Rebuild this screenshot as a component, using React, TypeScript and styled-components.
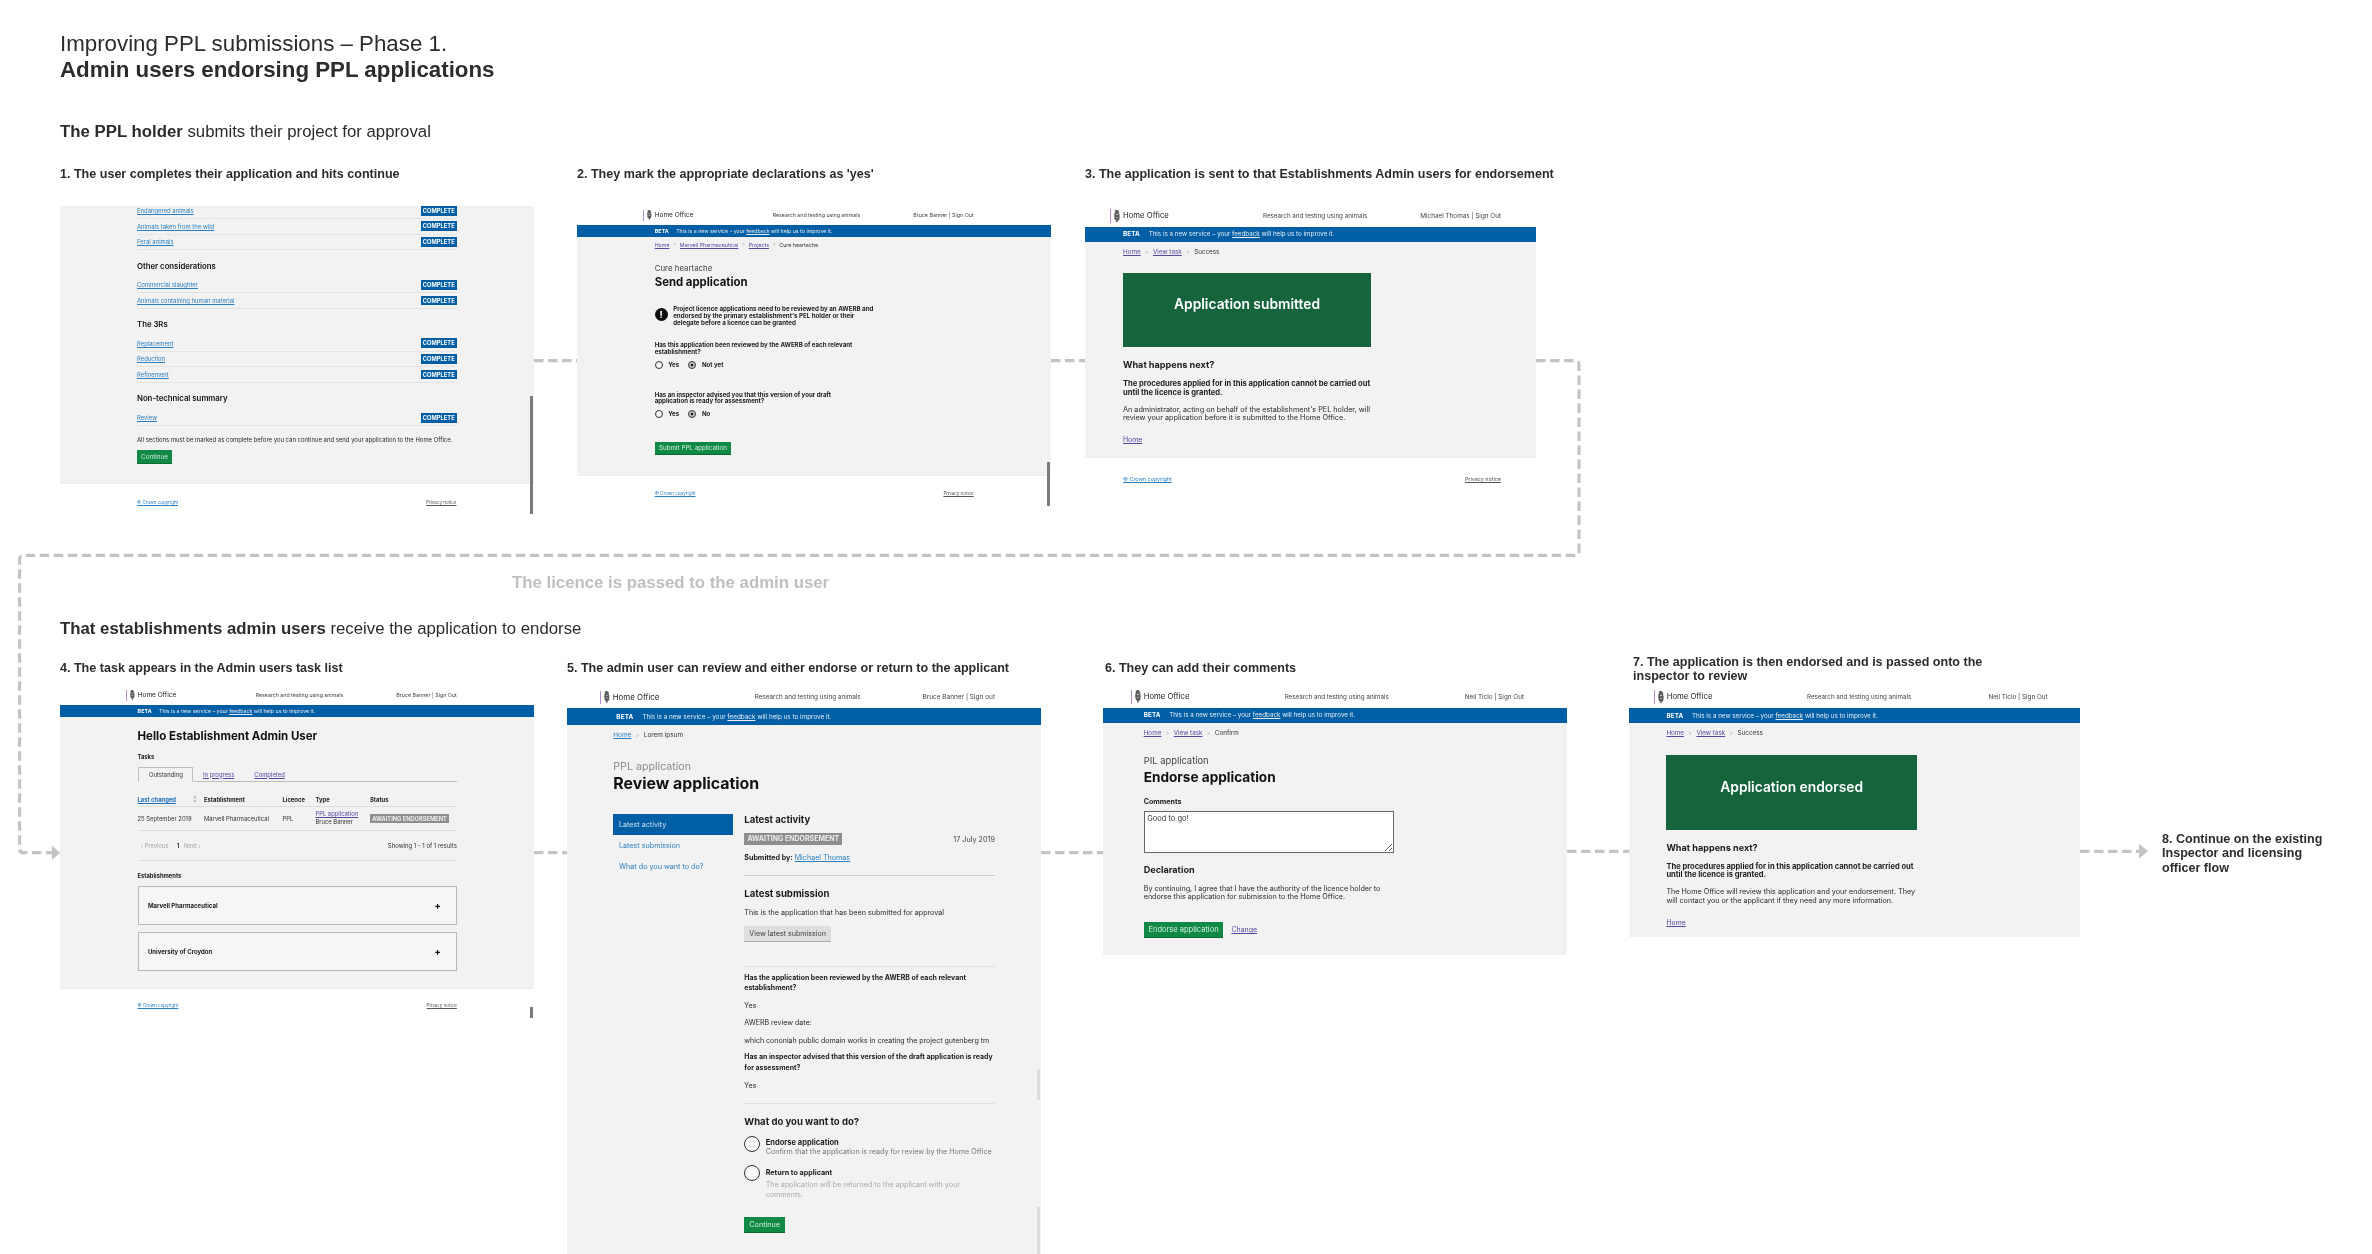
import React from 'react';
import styled, { createGlobalStyle } from 'styled-components';

const GlobalStyle = createGlobalStyle`
  html, body { margin: 0; padding: 0; background: #fff; }
  * { box-sizing: border-box; }
`;

const UI = `Inter, "Liberation Sans", sans-serif`;
const SOFT = 0.5;
const SOFT_LABEL = 0.3;

/* ---------- board ---------- */
const Board = styled.main`
  position: relative;
  width: 2372px;
  height: 1254px;
  overflow: hidden;
  padding: 31px 0 0 60px;
  background: #fff;
  color: #2c2c2c;
  font-family: "Liberation Sans", Arial, sans-serif;
`;
const Title = styled.h1`
  margin: 0;
  font-size: 22.3px;
  line-height: 26px;
  font-weight: 400;
  white-space: nowrap;
  filter: blur(${SOFT_LABEL}px);
  strong { font-weight: 700; }
`;
const Lede = styled.h2<{ $mt: number }>`
  margin: ${p => p.$mt}px 0 0;
  font-size: 16.8px;
  line-height: 20px;
  font-weight: 400;
  white-space: nowrap;
  filter: blur(${SOFT_LABEL}px);
  strong { font-weight: 700; }
`;
const Lane = styled.div<{ $mt: number; $h: number }>`
  display: flex;
  align-items: flex-start;
  margin-top: ${p => p.$mt}px;
  height: ${p => p.$h}px;
`;
const Step = styled.section<{ $ml?: number; $w: number; $mt?: number }>`
  flex: none;
  width: ${p => p.$w}px;
  margin-left: ${p => p.$ml ?? 0}px;
  margin-top: ${p => p.$mt ?? 0}px;
`;
const StepLabel = styled.h3<{ $lh?: number; $mt?: number; $ml?: number }>`
  margin: ${p => p.$mt ?? 0}px 0 0 ${p => p.$ml ?? 0}px;
  font-size: 12.55px;
  line-height: ${p => p.$lh ?? 20}px;
  font-weight: 700;
  white-space: nowrap;
  filter: blur(${SOFT_LABEL}px);
`;
const PassedNote = styled.p`
  margin: 0 0 0 452px;
  font-size: 16.8px;
  line-height: 20px;
  font-weight: 700;
  color: #bfbfbf;
  white-space: nowrap;
  filter: blur(${SOFT_LABEL}px);
`;
const Connectors = styled.svg`
  position: absolute;
  inset: 0;
  pointer-events: none;
`;

/* ---------- mock screens ---------- */
const Screen = styled.div<{ $mt: number; $k?: number; $h: number }>`
  position: relative;
  margin-top: ${p => p.$mt}px;
  height: ${p => p.$h}px;
  overflow: hidden;
  font-family: ${UI};
  font-size: ${p => (p.$k ?? 1) * 10}px;
  color: #111;
  background: #fff;
  filter: blur(${SOFT}px);
`;
const Scrollbar = styled.i<{ $top: number; $h: number; $light?: boolean }>`
  position: absolute;
  right: 1.5px;
  top: ${p => p.$top}px;
  height: ${p => p.$h}px;
  width: 2.2px;
  background: ${p => (p.$light ? '#dcdcdc' : '#7b7b7b')};
`;
const Header = styled.header<{ $h: number; $pb: number; $left: number; $right: number; $col: number }>`
  display: grid;
  grid-template-columns: ${p => p.$col}px 1fr auto;
  align-items: center;
  height: ${p => p.$h}px;
  padding: 0 ${p => p.$right}px ${p => p.$pb}px ${p => p.$left}px;
`;
const Brand = styled.div`
  display: flex;
  align-items: center;
  gap: 2.9px;
`;
const BrandBar = styled.i<{ $h: number }>`
  width: 1.4px;
  height: ${p => p.$h}px;
  background: #b48fd6;
`;
const BrandName = styled.span`
  font-size: 0.77em;
  color: #222;
  white-space: nowrap;
`;
const Service = styled.span`
  font-size: 0.625em;
  color: #444;
  white-space: nowrap;
`;
const UserNav = styled.span`
  font-size: 0.635em;
  color: #444;
  white-space: nowrap;
`;
const BetaBar = styled.div<{ $h: number; $left: number }>`
  display: flex;
  align-items: center;
  height: ${p => p.$h}px;
  padding-left: ${p => p.$left}px;
  background: #005ea5;
  color: #e3edf5;
  font-size: 0.625em;
  white-space: nowrap;
  a { color: inherit; text-decoration: underline; }
`;
const BetaTag = styled.b`
  flex: none;
  width: 4.1em;
  font-weight: 700;
  letter-spacing: 0.03em;
  color: #fff;
`;
const Body = styled.div<{ $h: number; $pl: number; $pr: number; $pt?: number }>`
  height: ${p => p.$h}px;
  padding: ${p => p.$pt ?? 0}px ${p => p.$pr}px 0 ${p => p.$pl}px;
  background: #f2f2f2;
  overflow: hidden;
`;
const Footer = styled.footer<{ $h: number; $pl: number; $pr: number; $fs?: number }>`
  display: flex;
  justify-content: space-between;
  align-items: center;
  height: ${p => p.$h}px;
  padding: 0 ${p => p.$pr}px 0 ${p => p.$pl}px;
  border-top: 1px solid #ececec;
  font-size: ${p => p.$fs ?? 0.54}em;
  white-space: nowrap;
`;
const FooterLink = styled.a<{ $muted?: boolean }>`
  color: ${p => (p.$muted ? '#555' : '#2b7fc0')};
  text-decoration: underline;
`;
const Crumbs = styled.nav`
  display: flex;
  align-items: center;
  gap: 0.7em;
  height: 8px;
  font-size: 0.63em;
  color: #333;
  white-space: nowrap;
  span { color: #aaa; font-size: 0.85em; }
`;
const TextLink = styled.a<{ $blue?: boolean }>`
  color: ${p => (p.$blue ? '#2b7fc0' : '#5a45a0')};
  text-decoration: underline;
`;
type Flow = { $mt?: number; $lh?: number; $fs?: number };
const Caption = styled.p<Flow & { $pale?: boolean }>`
  margin: ${p => p.$mt ?? 0}px 0 0;
  font-size: ${p => p.$fs ?? 0.94}em;
  line-height: ${p => p.$lh ?? 10}px;
  color: ${p => (p.$pale ? '#8a8a8a' : '#444')};
  white-space: nowrap;
`;
const PageTitle = styled.h4<Flow>`
  margin: ${p => p.$mt ?? 0}px 0 0;
  font-size: ${p => p.$fs ?? 1.36}em;
  line-height: ${p => p.$lh ?? 14}px;
  font-weight: 700;
  color: #111;
  white-space: nowrap;
`;
const Heading = styled.h5<Flow>`
  margin: ${p => p.$mt ?? 0}px 0 0;
  font-size: ${p => p.$fs ?? 0.91}em;
  line-height: ${p => p.$lh ?? 12}px;
  font-weight: 700;
  color: #1c1c1c;
  white-space: nowrap;
`;
const Strong = styled.p<Flow>`
  margin: ${p => p.$mt ?? 0}px 0 0;
  font-size: ${p => p.$fs ?? 0.755}em;
  line-height: ${p => p.$lh ?? 8.6}px;
  font-weight: 700;
  color: #1c1c1c;
  white-space: nowrap;
`;
const Copy = styled.p<Flow>`
  margin: ${p => p.$mt ?? 0}px 0 0;
  font-size: ${p => p.$fs ?? 0.725}em;
  line-height: ${p => p.$lh ?? 8.5}px;
  color: #2a2a2a;
  white-space: nowrap;
  b { font-weight: 700; color: #1c1c1c; }
`;
const Banner = styled.div<{ $w: number; $h: number; $mt: number }>`
  width: ${p => p.$w}px;
  height: ${p => p.$h}px;
  margin-top: ${p => p.$mt}px;
  padding-top: 21.5px;
  background: #15643b;
  color: #fff;
  font-size: 1.38em;
  line-height: 20px;
  font-weight: 600;
  text-align: center;
  white-space: nowrap;
`;
const GreenButton = styled.button<{ $w: number; $h: number; $mt?: number; $fs?: number }>`
  display: block;
  width: ${p => p.$w}px;
  height: ${p => p.$h}px;
  margin: ${p => p.$mt ?? 0}px 0 0;
  padding: 0;
  border: 0;
  border-bottom: 1px solid #0a6a32;
  background: #0f8944;
  color: #d7efe0;
  font-family: ${UI};
  font-size: ${p => p.$fs ?? 0.75}em;
  white-space: nowrap;
`;
const GreyButton = styled.button<{ $w: number; $h: number; $mt: number }>`
  display: block;
  width: ${p => p.$w}px;
  height: ${p => p.$h}px;
  margin: ${p => p.$mt}px 0 0;
  padding: 0;
  border: 0;
  border-bottom: 1px solid #aaa;
  background: #dedede;
  color: #444;
  font-family: ${UI};
  font-size: 0.7em;
  white-space: nowrap;
`;

/* step 1 */
const TaskList = styled.div<{ $mt: number }>`
  margin-top: ${p => p.$mt}px;
`;
const TaskRow = styled.div`
  display: flex;
  justify-content: space-between;
  align-items: center;
  height: 15.55px;
  border-bottom: 1px solid #e4e4e4;
  font-size: 0.592em;
  white-space: nowrap;
`;
const CompleteTag = styled.b`
  display: block;
  width: 35.5px;
  height: 9.8px;
  background: #005ea5;
  color: #fff;
  font-size: 0.97em;
  line-height: 9.8px;
  font-weight: 700;
  text-align: center;
`;
const SectionName = styled.h5<{ $mt: number }>`
  margin: ${p => p.$mt}px 0 0;
  font-size: 0.778em;
  line-height: 14px;
  font-weight: 600;
  color: #111;
  white-space: nowrap;
`;

/* step 2 */
const Warning = styled.div<{ $mt: number }>`
  display: flex;
  align-items: center;
  gap: 5.5px;
  height: 21px;
  margin-top: ${p => p.$mt}px;
`;
const WarningIcon = styled.span`
  flex: none;
  display: flex;
  align-items: center;
  justify-content: center;
  width: 13px;
  height: 13px;
  margin-top: -3px;
  border-radius: 50%;
  background: #0b0c0c;
  color: #fff;
  font-size: 9px;
  line-height: 1;
  font-weight: 800;
`;
const RadioRow = styled.div<{ $mt: number }>`
  display: flex;
  align-items: center;
  height: 9px;
  margin-top: ${p => p.$mt}px;
`;
const Radio = styled.i<{ $d: number; $on?: boolean }>`
  flex: none;
  display: block;
  width: ${p => p.$d}px;
  height: ${p => p.$d}px;
  border: 1px solid #333;
  border-radius: 50%;
  background: ${p => (p.$on ? 'radial-gradient(circle, #111 0 34%, #ccc 38% 100%)' : '#f8f8f8')};
`;
const RadioText = styled.span<{ $gap: number; $w?: number }>`
  margin-left: ${p => p.$gap}px;
  width: ${p => (p.$w ? `${p.$w}px` : 'auto')};
  font-size: 0.73em;
  font-weight: 700;
  color: #222;
  white-space: nowrap;
`;

/* step 4 */
const Tabs = styled.div<{ $mt: number }>`
  display: flex;
  align-items: center;
  height: 14.7px;
  margin-top: ${p => p.$mt}px;
  border-bottom: 1px solid #bdbdbd;
  font-size: 0.705em;
  white-space: nowrap;
`;
const ActiveTab = styled.span`
  align-self: stretch;
  display: flex;
  align-items: center;
  width: 55.4px;
  padding-left: 10.4px;
  margin-bottom: -1px;
  border: 1px solid #bdbdbd;
  border-bottom-color: #f2f2f2;
  background: #f2f2f2;
  color: #333;
`;
const TabLink = styled.a<{ $ml: number }>`
  margin-left: ${p => p.$ml}px;
  color: #5a45a0;
  text-decoration: underline;
`;
const TableRow = styled.div<{ $mt?: number; $h: number }>`
  display: grid;
  grid-template-columns: 66.5px 78.5px 32.9px 54.6px 1fr;
  align-items: center;
  height: ${p => p.$h}px;
  margin-top: ${p => p.$mt ?? 0}px;
  border-bottom: 1px solid #dcdcdc;
  font-size: 0.7em;
  color: #333;
  white-space: nowrap;
`;
const TableHead = styled.b`
  font-weight: 700;
  color: #222;
`;
const SortCell = styled.span`
  display: flex;
  align-items: center;
  justify-content: space-between;
  padding-right: 7px;
`;
const SortLink = styled.a`
  color: #1d70b8;
  font-weight: 700;
  text-decoration: underline;
`;
const TypeCell = styled.div`
  line-height: 8.3px;
`;
const StatusTag = styled.b<{ $w: number; $h: number; $fs: number }>`
  display: block;
  flex: none;
  width: ${p => p.$w}px;
  height: ${p => p.$h}px;
  background: #8e8e8e;
  color: #ececec;
  font-size: ${p => p.$fs}em;
  line-height: ${p => p.$h}px;
  font-weight: 700;
  text-align: center;
  white-space: nowrap;
`;
const Pager = styled.div`
  display: flex;
  align-items: center;
  height: 30.6px;
  padding-left: 3.2px;
  border-bottom: 1px solid #dcdcdc;
  font-size: 0.7em;
  color: #a5a5a5;
  white-space: nowrap;
`;
const PagerCurrent = styled.b`
  margin: 0 4.6px 0 8.3px;
  font-weight: 700;
  color: #333;
`;
const PagerCount = styled.span`
  margin-left: auto;
  font-size: 1.015em;
  color: #333;
`;
const Accordion = styled.div<{ $mt: number }>`
  display: flex;
  justify-content: space-between;
  align-items: center;
  height: 39px;
  margin-top: ${p => p.$mt}px;
  padding: 0 15px 0 9.4px;
  border: 1px solid #b8b8b8;
  background: #f6f6f6;
  font-size: 0.72em;
  font-weight: 700;
  color: #222;
  white-space: nowrap;
`;
const Plus = styled.span`
  font-size: 1.5em;
  line-height: 1;
  font-weight: 800;
  color: #111;
`;

/* step 5 */
const Columns = styled.div<{ $mt: number }>`
  display: flex;
  gap: 11.6px;
  margin-top: ${p => p.$mt}px;
`;
const SideNav = styled.nav`
  flex: none;
  width: 119.4px;
`;
const SideItem = styled.a<{ $active?: boolean }>`
  display: flex;
  align-items: center;
  height: 21px;
  padding-left: 5.7px;
  background: ${p => (p.$active ? '#005ea5' : 'transparent')};
  color: ${p => (p.$active ? '#cfe0ee' : '#2b7fc0')};
  font-size: 0.706em;
  white-space: nowrap;
`;
const MainCol = styled.div`
  flex: none;
  width: 250.7px;
`;
const SpreadRow = styled.div<{ $mt: number; $h: number }>`
  display: flex;
  justify-content: space-between;
  align-items: center;
  height: ${p => p.$h}px;
  margin-top: ${p => p.$mt}px;
`;
const Rule = styled.hr<{ $mt: number; $dark?: boolean }>`
  height: ${p => (p.$dark ? 1.5 : 1)}px;
  margin: ${p => p.$mt}px 0 0;
  border: 0;
  background: ${p => (p.$dark ? '#cccccc' : '#e0e0e0')};
`;
const DateText = styled.span`
  font-size: 0.708em;
  color: #444;
`;
const ChoiceRow = styled.div<{ $mt: number; $h: number }>`
  display: flex;
  gap: 5.4px;
  height: ${p => p.$h}px;
  margin-top: ${p => p.$mt}px;
`;
const ChoiceText = styled.div`
  padding-top: 3.5px;
`;
const Hint = styled.p<Flow & { $pale?: boolean }>`
  margin: ${p => p.$mt ?? 0}px 0 0;
  font-size: 0.702em;
  line-height: ${p => p.$lh ?? 8.7}px;
  color: ${p => (p.$pale ? '#aaaaaa' : '#777777')};
  white-space: nowrap;
`;

/* step 6 */
const CommentBox = styled.textarea`
  display: block;
  width: 250px;
  height: 42px;
  margin: 4.5px 0 0;
  padding: 2.5px 2.5px;
  border: 1.4px solid #666;
  border-radius: 0;
  outline: 0;
  background: #fff;
  color: #333;
  font-family: ${UI};
  font-size: 0.75em;
  line-height: 9px;
`;
const ActionRow = styled.div<{ $mt: number }>`
  display: flex;
  align-items: center;
  gap: 8px;
  margin-top: ${p => p.$mt}px;
`;
const ActionLink = styled.a`
  font-size: 0.7em;
  color: #5a45a0;
  text-decoration: underline;
`;

/* ---------- shared pieces ---------- */
const Crest = ({ h }: { h: number }) => (
  <svg width={h * 0.42} height={h * 0.92} viewBox="0 0 10 22" aria-hidden="true">
    <path
      fill="#5d5d5d"
      d="M3.5 0h3l.4 2 1.6-.8.3 2.2-1.2 1 1.6 1.2-.6 1.6 1.4 1.8-.8 1.4.8 1.4-1 1.6.8 1.8-1.6 1.4.4 1.6L6.2 18l.3 2.4L5 22l-1.5-1.6.3-2.4-2.4-1.1.4-1.6L.2 13.9 1 12.1 0 10.5l.8-1.4L0 7.7l1.4-1.8L.8 4.3 2.4 3.1l-1.2-1L1.5 0l1.6 1z"
    />
    <path fill="#f0f0f0" d="M3.3 7h3.4v1H3.3zM3.3 12h3.4v1H3.3z" />
  </svg>
);

const Sorter = () => (
  <svg width="4" height="8" viewBox="0 0 4 8" aria-hidden="true">
    <path fill="#c4c4c4" d="M2 0 4 3.2H0zM2 8 0 4.8h4z" />
  </svg>
);

type ChromeProps = {
  h: number; pb: number; left: number; right: number; col: number;
  barH: number; user: string; betaH: number; betaLeft: number;
};
const Chrome = ({ h, pb, left, right, col, barH, user, betaH, betaLeft }: ChromeProps) => (
  <>
    <Header $h={h} $pb={pb} $left={left} $right={right} $col={col}>
      <Brand>
        <BrandBar $h={barH} />
        <Crest h={barH} />
        <BrandName>Home Office</BrandName>
      </Brand>
      <Service>Research and testing using animals</Service>
      <UserNav>{user}</UserNav>
    </Header>
    <BetaBar $h={betaH} $left={betaLeft}>
      <BetaTag>BETA</BetaTag>
      <span>This is a new service – your <a>feedback</a> will help us to improve it.</span>
    </BetaBar>
  </>
);

const PageFoot = ({ h, pl, pr, fs }: { h: number; pl: number; pr: number; fs?: number }) => (
  <Footer $h={h} $pl={pl} $pr={pr} $fs={fs}>
    <FooterLink>© Crown copyright</FooterLink>
    <FooterLink $muted>Privacy notice</FooterLink>
  </Footer>
);

const Task = ({ name }: { name: string }) => (
  <TaskRow>
    <TextLink $blue>{name}</TextLink>
    <CompleteTag>COMPLETE</CompleteTag>
  </TaskRow>
);

export default function App() {
  return (
    <Board>
      <GlobalStyle />
      <Title>
        Improving PPL submissions – Phase 1.<br />
        <strong>Admin users endorsing PPL applications</strong>
      </Title>
      <Lede $mt={39}><strong>The PPL holder</strong> submits their project for approval</Lede>

      <Lane $mt={21.8} $h={409.2}>
        <Step $w={474}>
          <StepLabel>1. The user completes their application and hits continue</StepLabel>
          <Screen $mt={22.1} $h={308}>
            <Body $h={277.5} $pl={77} $pr={77.5}>
              <TaskList $mt={-2.4}>
                <Task name="Endangered animals" />
                <Task name="Animals taken from the wild" />
                <Task name="Feral animals" />
              </TaskList>
              <SectionName $mt={8.4}>Other considerations</SectionName>
              <TaskList $mt={5.1}>
                <Task name="Commercial slaughter" />
                <Task name="Animals containing human material" />
              </TaskList>
              <SectionName $mt={8.3}>The 3Rs</SectionName>
              <TaskList $mt={5.1}>
                <Task name="Replacement" />
                <Task name="Reduction" />
                <Task name="Refinement" />
              </TaskList>
              <SectionName $mt={8.25}>Non-technical summary</SectionName>
              <TaskList $mt={5.5}>
                <Task name="Review" />
              </TaskList>
              <Copy $mt={10.25} $lh={8} $fs={0.594}>All sections must be marked as complete before you can continue and send your application to the Home Office.</Copy>
              <GreenButton $w={35} $h={13.5} $mt={6.1} $fs={0.63}>Continue</GreenButton>
            </Body>
            <PageFoot h={36.6} pl={77} pr={77.5} fs={0.455} />
            <Scrollbar $top={190} $h={118} />
          </Screen>
        </Step>

        <Step $ml={43} $w={474}>
          <StepLabel>2. They mark the appropriate declarations as 'yes'</StepLabel>
          <Screen $mt={24.2} $k={0.84} $h={303}>
            <Chrome h={16.7} pb={1.7} left={66} right={77.3} col={129.7} barH={11} user="Bruce Banner | Sign Out" betaH={12.3} betaLeft={77.7} />
            <Body $h={238} $pl={77.7} $pr={77} $pt={4}>
              <Crumbs>
                <TextLink>Home</TextLink><span>&gt;</span>
                <TextLink>Marvell Pharmaceutical</TextLink><span>&gt;</span>
                <TextLink>Projects</TextLink><span>&gt;</span>
                Cure heartache
              </Crumbs>
              <Caption $mt={14} $lh={10}>Cure heartache</Caption>
              <PageTitle $mt={2} $fs={1.354} $lh={14}>Send application</PageTitle>
              <Warning $mt={16.2}>
                <WarningIcon>!</WarningIcon>
                <Strong $lh={7} $fs={0.739}>
                  Project licence applications need to be reviewed by an AWERB and<br />
                  endorsed by the primary establishment's PEL holder or their<br />
                  delegate before a licence can be granted
                </Strong>
              </Warning>
              <Strong $mt={16.1} $lh={6.8} $fs={0.73}>
                Has this application been reviewed by the AWERB of each relevant<br />establishment?
              </Strong>
              <RadioRow $mt={4.3}>
                <Radio $d={8} /><RadioText $gap={5.6} $w={20}>Yes</RadioText>
                <Radio $d={8} $on /><RadioText $gap={5.6}>Not yet</RadioText>
              </RadioRow>
              <Strong $mt={22.4} $lh={6.8} $fs={0.73}>
                Has an inspector advised you that this version of your draft<br />application is ready for assessment?
              </Strong>
              <RadioRow $mt={4.3}>
                <Radio $d={8} /><RadioText $gap={5.6} $w={20}>Yes</RadioText>
                <Radio $d={8} $on /><RadioText $gap={5.6}>No</RadioText>
              </RadioRow>
              <GreenButton $w={76.7} $h={13.3} $mt={23.2} $fs={0.745}>Submit PPL application</GreenButton>
            </Body>
            <PageFoot h={36} pl={77.7} pr={77.3} />
            <Scrollbar $top={254} $h={43.7} />
          </Screen>
        </Step>

        <Step $ml={34} $w={451}>
          <StepLabel>3. The application is sent to that Establishments Admin users for endorsement</StepLabel>
          <Screen $mt={23.2} $h={296}>
            <Chrome h={20} pb={2} left={25} right={35} col={153} barH={14} user="Michael Thomas | Sign Out" betaH={15} betaLeft={38} />
            <Body $h={215} $pl={38} $pr={35} $pt={5.7}>
              <Crumbs>
                <TextLink>Home</TextLink><span>&gt;</span>
                <TextLink>View task</TextLink><span>&gt;</span>
                Success
              </Crumbs>
              <Banner $w={248} $h={74.6} $mt={17}>Application submitted</Banner>
              <Heading $mt={11.4}>What happens next?</Heading>
              <Strong $mt={9.7}>
                The procedures applied for in this application cannot be carried out<br />until the licence is granted.
              </Strong>
              <Copy $mt={8.15}>
                An administrator, acting on behalf of the establishment's PEL holder, will<br />
                review your application before it is submitted to the Home Office.
              </Copy>
              <Copy $mt={12.45} $lh={9} $fs={0.69}><TextLink>Home</TextLink></Copy>
            </Body>
            <PageFoot h={42.6} pl={38} pr={35} />
          </Screen>
        </Step>
      </Lane>

      <PassedNote>The licence is passed to the admin user</PassedNote>
      <Lede $mt={26.3}><strong>That establishments admin users</strong> receive the application to endorse</Lede>

      <Lane $mt={18.4} $h={600}>
        <Step $w={474}>
          <StepLabel>4. The task appears in the Admin users task list</StepLabel>
          <Screen $mt={10.3} $k={0.84} $h={332}>
            <Chrome h={17} pb={2} left={66} right={77.2} col={129.7} barH={11} user="Bruce Banner | Sign Out" betaH={12.3} betaLeft={77.5} />
            <Body $h={270.4} $pl={77.5} $pr={77.2} $pt={12}>
              <PageTitle $fs={1.37} $lh={14}>Hello Establishment Admin User</PageTitle>
              <Strong $mt={9.4} $lh={8} $fs={0.694}>Tasks</Strong>
              <Tabs $mt={6.6}>
                <ActiveTab>Outstanding</ActiveTab>
                <TabLink $ml={10}>In progress</TabLink>
                <TabLink $ml={20}>Completed</TabLink>
              </Tabs>
              <TableRow $mt={10.7} $h={14.6}>
                <SortCell><SortLink>Last changed</SortLink><Sorter /></SortCell>
                <TableHead>Establishment</TableHead>
                <TableHead>Licence</TableHead>
                <TableHead>Type</TableHead>
                <TableHead>Status</TableHead>
              </TableRow>
              <TableRow $h={23.4}>
                <span>25 September 2019</span>
                <span>Marvell Pharmaceutical</span>
                <span>PPL</span>
                <TypeCell><TextLink>PPL application</TextLink><br />Bruce Banner</TypeCell>
                <StatusTag $w={79} $h={9.3} $fs={0.97}>AWAITING ENDORSEMENT</StatusTag>
              </TableRow>
              <Pager>
                <span>‹ Previous</span>
                <PagerCurrent>1</PagerCurrent>
                <span>Next ›</span>
                <PagerCount>Showing 1 - 1 of 1 results</PagerCount>
              </Pager>
              <Strong $mt={10.4} $lh={8} $fs={0.694}>Establishments</Strong>
              <Accordion $mt={6.6}>Marvell Pharmaceutical<Plus>+</Plus></Accordion>
              <Accordion $mt={6.4}>University of Croydon<Plus>+</Plus></Accordion>
            </Body>
            <PageFoot h={35.2} pl={77.5} pr={77.2} />
            <Scrollbar $top={318.7} $h={11.3} />
          </Screen>
        </Step>

        <Step $ml={33} $w={474}>
          <StepLabel>5. The admin user can review and either endorse or return to the applicant</StepLabel>
          <Screen $mt={10.3} $k={1.02} $h={570}>
            <Chrome h={20.3} pb={1.7} left={33} right={46} col={154.7} barH={13.3} user="Bruce Banner | Sign out" betaH={16.7} betaLeft={49.3} />
            <Body $h={540} $pl={46.3} $pr={46} $pt={6}>
              <Crumbs>
                <TextLink $blue>Home</TextLink><span>&gt;</span>
                Lorem ipsum
              </Crumbs>
              <Caption $mt={20.8} $fs={1.047} $lh={13} $pale>PPL application</Caption>
              <PageTitle $mt={2.2} $fs={1.556} $lh={18}>Review application</PageTitle>
              <Columns $mt={21}>
                <SideNav>
                  <SideItem $active>Latest activity</SideItem>
                  <SideItem>Latest submission</SideItem>
                  <SideItem>What do you want to do?</SideItem>
                </SideNav>
                <MainCol>
                  <Heading $mt={0.3} $fs={0.934}>Latest activity</Heading>
                  <SpreadRow $mt={7} $h={11.7}>
                    <StatusTag $w={98} $h={11.7} $fs={0.687}>AWAITING ENDORSEMENT</StatusTag>
                    <DateText>17 July 2019</DateText>
                  </SpreadRow>
                  <Copy $mt={7.8} $lh={9} $fs={0.7}><b>Submitted by:</b> <TextLink $blue>Michael Thomas</TextLink></Copy>
                  <Rule $mt={13.2} $dark />
                  <Heading $mt={11.2} $fs={0.94}>Latest submission</Heading>
                  <Copy $mt={8.5} $lh={9} $fs={0.703}>This is the application that has been submitted for approval</Copy>
                  <GreyButton $w={86.7} $h={16} $mt={8.8}>View latest submission</GreyButton>
                  <Rule $mt={23.7} />
                  <Strong $mt={6.15} $lh={10.3} $fs={0.68}>Has the application been reviewed by the AWERB of each relevant<br />establishment?</Strong>
                  <Copy $mt={7.35} $lh={9} $fs={0.692}>Yes</Copy>
                  <Copy $mt={8.7} $lh={9} $fs={0.692}>AWERB review date:</Copy>
                  <Copy $mt={8.3} $lh={9} $fs={0.692}>which cononiah public domain works in creating the project gutenberg tm</Copy>
                  <Strong $mt={7.75} $lh={10.3} $fs={0.68}>Has an inspector advised that this version of the draft application is ready<br />for assessment?</Strong>
                  <Copy $mt={7.65} $lh={9} $fs={0.692}>Yes</Copy>
                  <Rule $mt={13.5} />
                  <Heading $mt={10.9} $fs={0.936} $lh={13}>What do you want to do?</Heading>
                  <ChoiceRow $mt={7.5} $h={20.7}>
                    <Radio $d={16} />
                    <ChoiceText>
                      <Strong $lh={8.7} $fs={0.74}>Endorse application</Strong>
                      <Hint>Confirm that the application is ready for review by the Home Office</Hint>
                    </ChoiceText>
                  </ChoiceRow>
                  <ChoiceRow $mt={8.6} $h={36}>
                    <Radio $d={16} />
                    <ChoiceText>
                      <Strong $lh={9} $fs={0.706}>Return to applicant</Strong>
                      <Hint $mt={3.2} $lh={10} $pale>The application will be returned to the applicant with your<br />comments.</Hint>
                    </ChoiceText>
                  </ChoiceRow>
                  <GreenButton $w={40.7} $h={16} $mt={16.3} $fs={0.706}>Continue</GreenButton>
                </MainCol>
              </Columns>
            </Body>
            <Scrollbar $top={381.3} $h={30.7} $light />
            <Scrollbar $top={518.7} $h={47.3} $light />
          </Screen>
        </Step>

        <Step $ml={62} $w={464}>
          <StepLabel $ml={2}>6. They can add their comments</StepLabel>
          <Screen $mt={10.3} $h={270}>
            <Chrome h={20} pb={2.6} left={27.7} right={43} col={154} barH={14} user="Neil Ticlo | Sign Out" betaH={14.7} betaLeft={40.7} />
            <Body $h={232.6} $pl={40.7} $pr={40} $pt={6}>
              <Crumbs>
                <TextLink>Home</TextLink><span>&gt;</span>
                <TextLink>View task</TextLink><span>&gt;</span>
                Confirm
              </Crumbs>
              <Caption $mt={18.5} $lh={11}>PIL application</Caption>
              <PageTitle $mt={3.1} $lh={16}>Endorse application</PageTitle>
              <Strong $mt={11.9} $lh={9} $fs={0.714}>Comments</Strong>
              <CommentBox readOnly defaultValue="Good to go!" />
              <Heading $mt={11.6}>Declaration</Heading>
              <Copy $mt={8.8} $lh={8.4} $fs={0.72}>
                By continuing, I agree that I have the authority of the licence holder to<br />
                endorse this application for submission to the Home Office.
              </Copy>
              <ActionRow $mt={19.8}>
                <GreenButton $w={79.7} $h={16.3}>Endorse application</GreenButton>
                <ActionLink>Change</ActionLink>
              </ActionRow>
            </Body>
          </Screen>
        </Step>

        <Step $ml={62} $w={451}>
          <StepLabel $lh={14} $mt={-3} $ml={4}>
            7. The application is then endorsed and is passed onto the<br />inspector to review
          </StepLabel>
          <Screen $mt={5.3} $h={250}>
            <Chrome h={20.3} pb={2.3} left={24.7} right={32.3} col={153.3} barH={14} user="Neil Ticlo | Sign Out" betaH={15} betaLeft={37.4} />
            <Body $h={213.4} $pl={37.4} $pr={32} $pt={5.7}>
              <Crumbs>
                <TextLink>Home</TextLink><span>&gt;</span>
                <TextLink>View task</TextLink><span>&gt;</span>
                Success
              </Crumbs>
              <Banner $w={250.5} $h={75} $mt={18.3}>Application endorsed</Banner>
              <Heading $mt={11.7}>What happens next?</Heading>
              <Strong $mt={8.85} $lh={8.4}>
                The procedures applied for in this application cannot be carried out<br />until the licence is granted.
              </Strong>
              <Copy $mt={8.3} $lh={8.7} $fs={0.72}>
                The Home Office will review this application and your endorsement. They<br />
                will contact you or the applicant if they need any more information.
              </Copy>
              <Copy $mt={13.15} $lh={9} $fs={0.69}><TextLink>Home</TextLink></Copy>
            </Body>
          </Screen>
        </Step>

        <Step $ml={82} $w={170} $mt={174.1}>
          <StepLabel $lh={14.4}>
            8. Continue on the existing<br />Inspector and licensing<br />officer flow
          </StepLabel>
        </Step>
      </Lane>

      <Connectors width="2372" height="1254" viewBox="0 0 2372 1254" aria-hidden="true">
        <g fill="none" stroke="#c4c4c4" strokeWidth="3.2" strokeDasharray="9.5 4.5">
          <path d="M534 360.7H577" />
          <path d="M1051 360.7H1085" />
          <path d="M1536 360.7H1575Q1579 360.7 1579 364.7V551.3Q1579 555.3 1575 555.3H23.6Q19.6 555.3 19.6 559.3V848.7Q19.6 852.7 23.6 852.7H52" />
          <path d="M534 852.7H567" />
          <path d="M1041 852.7H1103" />
          <path d="M1567 851.3H1629" />
          <path d="M2080 851.3H2140" />
        </g>
        <path fill="#c4c4c4" d="M52 845.5 60 852.7 52 859.9z" />
        <path fill="#c4c4c4" d="M2139 843.8 2148 851.3 2139 858.8z" />
      </Connectors>
    </Board>
  );
}
